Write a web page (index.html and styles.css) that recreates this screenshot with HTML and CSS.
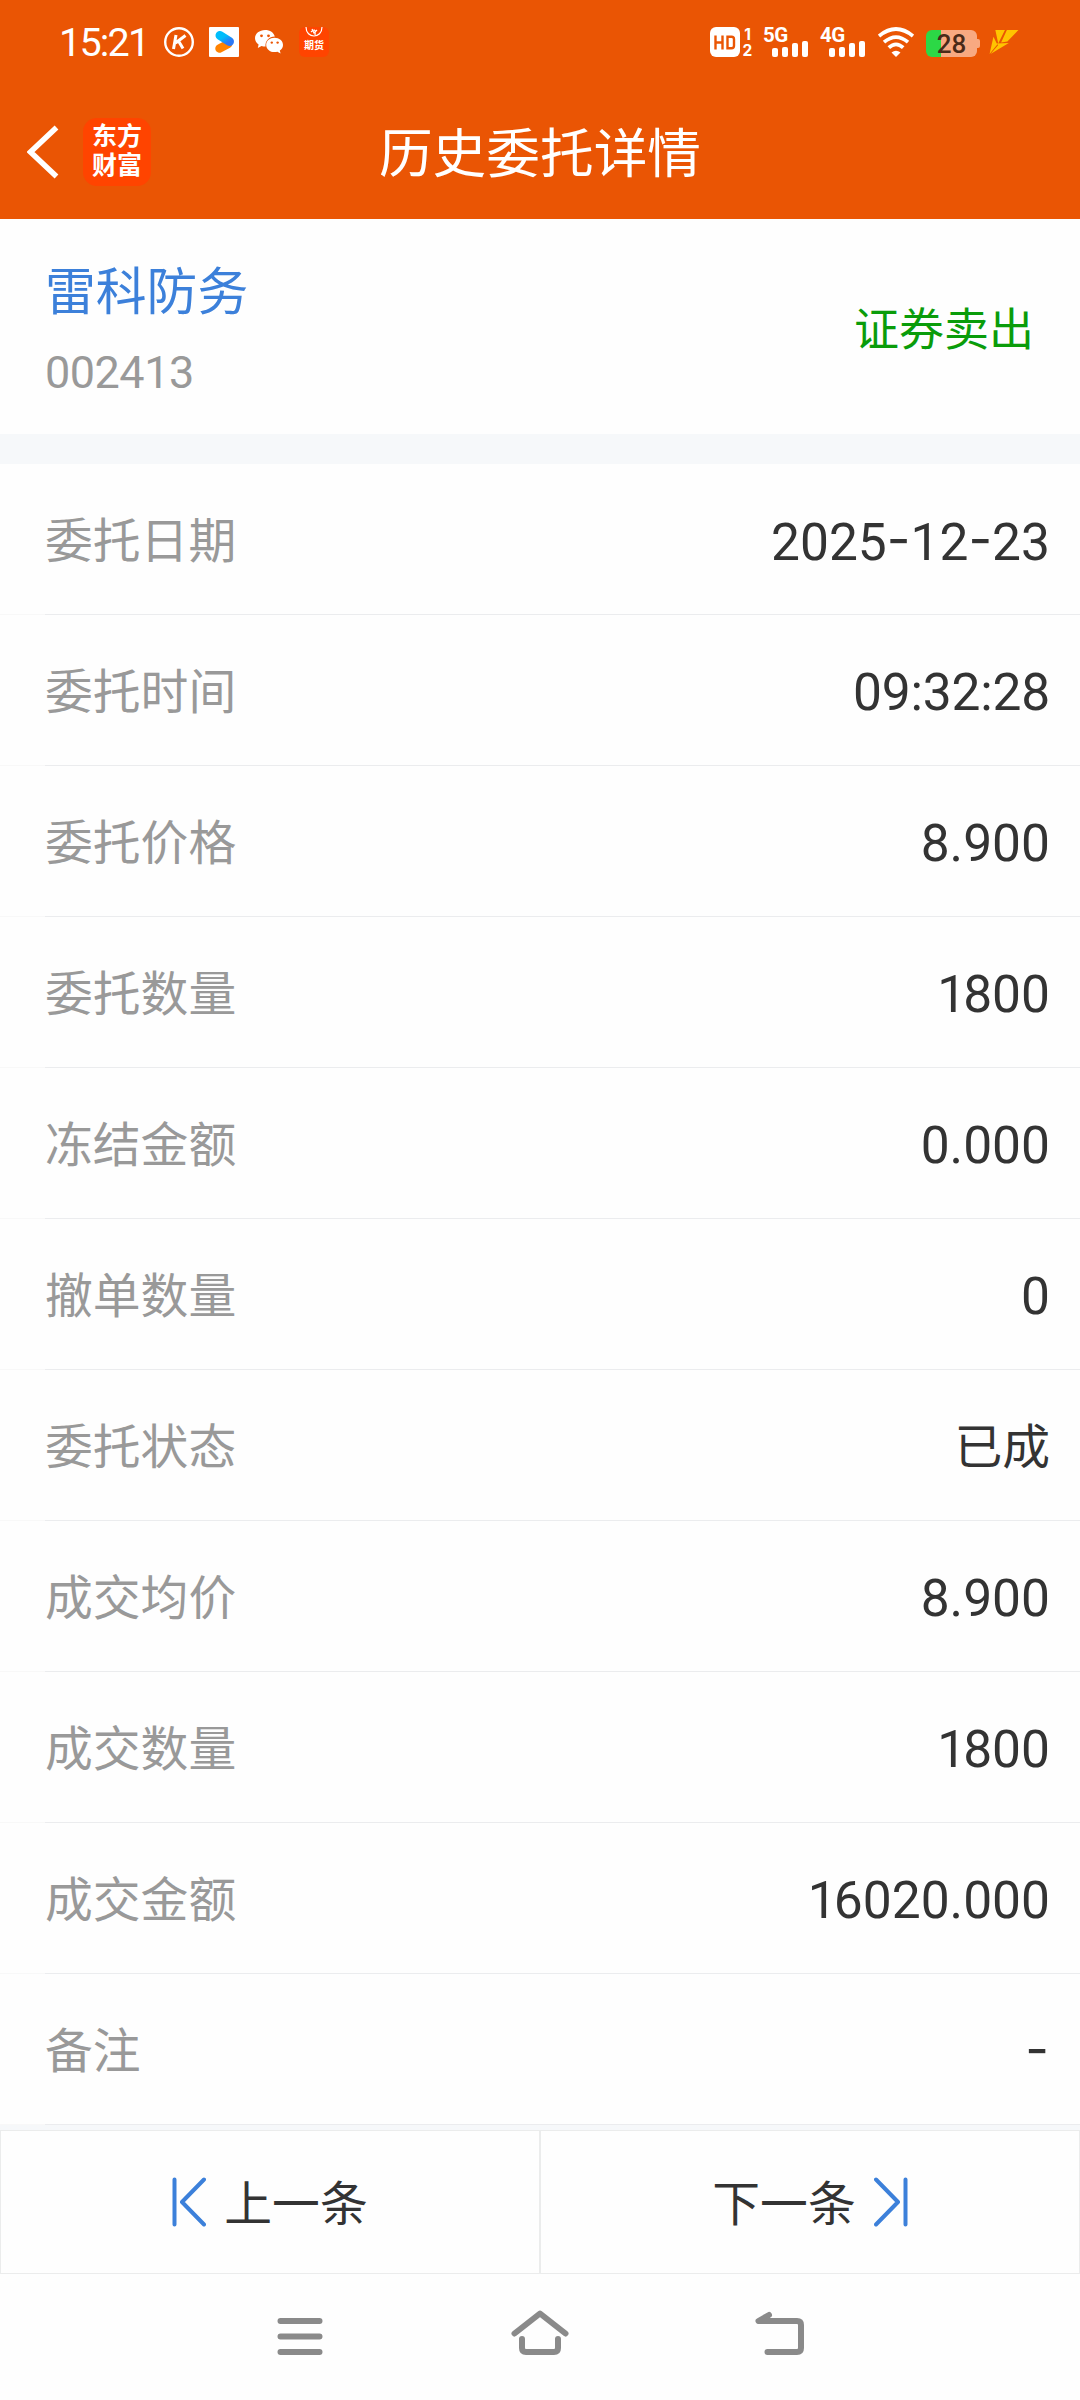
FILE: index.html
```html
<!DOCTYPE html>
<html lang="zh-CN">
<head>
<meta charset="utf-8">
<title>历史委托详情</title>
<link rel="stylesheet" href="styles.css">
</head>
<body>
<header class="header">
  <div class="status">
    <div class="status-left">
      <span class="clock">15:21</span>
      <svg class="s30" viewBox="0 0 30 30"><circle cx="15" cy="15" r="13.8" fill="none" stroke="#fff" stroke-width="2.4"/><path d="M12 8 9.500 22M21.500 8.500 11.500 16M14.500 14 19 21.500" fill="none" stroke="#fff" stroke-width="3"/></svg>
      <svg class="s30" viewBox="0 0 30 30"><defs><linearGradient id="play" x1="0" y1="0" x2="1" y2="1"><stop offset="0.300" stop-color="#00bdfb"/><stop offset="1" stop-color="#2b78f5"/></linearGradient></defs><rect width="30" height="30" rx="1" fill="#fff"/><path d="M10.500 21.500 19 17" stroke="#ff8200" stroke-width="8.500" stroke-linecap="round"/><path d="M11 8.500 20.500 14.500" stroke="url(#play)" stroke-width="9" stroke-linecap="round"/></svg>
      <svg class="s30" viewBox="0 0 30 30"><path d="M11 3C5.500 3 1 6.600 1 11.200c0 2.600 1.400 4.800 3.600 6.300L3.800 21l3.700-2c1.300.4 2.600.5 4 .5C11 14 15 9.500 20.800 9.500 20 5.700 16 3 11 3Z" fill="#fff"/><path d="M20.500 10.800c-4.700 0-8.300 3.100-8.300 7.100 0 4 3.700 7.200 8.300 7.200 1 0 2-.2 2.900-.4l3.200 1.900-.8-3.100c1.900-1.300 3.200-3.300 3.200-5.600 0-4-3.800-7.100-8.500-7.100Z" fill="#fff"/><g fill="#ea5504"><circle cx="7.500" cy="8.800" r="1.400"/><circle cx="14.500" cy="8.800" r="1.400"/><circle cx="17.800" cy="15.600" r="1.200"/><circle cx="23.600" cy="15.600" r="1.200"/></g></svg>
      <span class="futures"><svg viewBox="0 0 30 12"><path d="M7 0c0 12 16 12 16 0M12 5c3-3 5-3 4 3M13 2l2 4 3-3" fill="none" stroke="#fff" stroke-width="1.200"/></svg><b>期货</b></span>
    </div>
    <div class="status-right">
      <svg class="s30" viewBox="0 0 30 30"><rect width="30" height="30" rx="6" fill="#fff"/><path d="M5.500 8.500v14M12.500 8.500v14M5.500 15.500h7M17.500 9.700h4q2.500 0 2.500 2.500v6.600q0 2.500-2.500 2.500h-4z" fill="none" stroke="#ea5504" stroke-width="2.400"/></svg>
      <div class="sims"><span>1</span><span>2</span></div>
      <div class="cell"><span>5G</span><i></i><i></i><i></i><i></i></div>
      <div class="cell"><span>4G</span><i></i><i></i><i></i><i></i></div>
      <svg class="wifi" viewBox="0 0 36 30"><g fill="none" stroke="#fff" stroke-width="3.700"><path d="M1 9Q18-5 35 9"/><path d="M6 15.200Q18 5 30 15.200"/><path d="M10.800 20.700Q18 14 25.200 20.700"/></g><path d="M13.500 25.500Q18 22 22.500 25.500L18 30Z" fill="#fff"/></svg>
      <div class="battery">28</div>
      <svg class="bolt" viewBox="0 0 30 26"><path d="M6 0H16L9 14ZM18 0H30L18.500 12L12 13ZM0 25 4 7 8 15ZM1 25 9 15.500 7 14 20 13.500Z" fill="#ffc400"/></svg>
    </div>
  </div>
  <div class="nav">
    <svg class="back" viewBox="0 0 32 54"><path d="M29.500 2.500 3.500 27 29.500 51.500" fill="none" stroke="#fff" stroke-width="5.500"/></svg>
    <div class="brand">东方<br>财富</div>
    <h1>历史委托详情</h1>
  </div>
</header>
<section class="stock">
  <div><div class="name">雷科防务</div><div class="code">002413</div></div>
  <div class="side">证券卖出</div>
</section>
<dl class="list">
  <div class="row"><dt>委托日期</dt><dd>2025<span class="dash">-</span>12<span class="dash">-</span>23</dd></div>
  <div class="row"><dt>委托时间</dt><dd class="time">09:32:28</dd></div>
  <div class="row"><dt>委托价格</dt><dd>8.900</dd></div>
  <div class="row"><dt>委托数量</dt><dd><span class="one">1</span>800</dd></div>
  <div class="row"><dt>冻结金额</dt><dd>0.000</dd></div>
  <div class="row"><dt>撤单数量</dt><dd>0</dd></div>
  <div class="row"><dt>委托状态</dt><dd class="zh">已成</dd></div>
  <div class="row"><dt>成交均价</dt><dd>8.900</dd></div>
  <div class="row"><dt>成交数量</dt><dd><span class="one">1</span>800</dd></div>
  <div class="row"><dt>成交金额</dt><dd><span class="one">1</span>6020.000</dd></div>
  <div class="row"><dt>备注</dt><dd><span class="dash last">-</span></dd></div>
</dl>
<div class="pager">
  <div class="page"><svg class="step" viewBox="0 0 34 50"><path d="M2.500 2.500V47.500M32 2.500 10 25 32 47.500"/></svg><span>上一条</span></div>
  <div class="page"><span>下一条</span><svg class="step" viewBox="0 0 34 50"><path d="M31.500 2.500V47.500M2 2.500 24 25 2 47.500"/></svg></div>
</div>
<nav class="sysnav">
  <svg viewBox="0 0 60 60"><path d="M10.500 17H49.500M10.500 32.500H49.500M10.500 48H49.500"/></svg>
  <svg viewBox="0 0 60 60"><path d="M4.500 29.500 30 9.500 55.500 29.500M12 35V44Q12 48 16 48H44Q48 48 48 44V35"/></svg>
  <svg viewBox="0 0 60 60"><path d="M19 11 8.500 17H47Q51 17 51 21V44Q51 48 47 48H17.500"/></svg>
</nav>
</body>
</html>
```
FILE: styles.css
```css
* { box-sizing: border-box; }
body {
  margin: 0;
  width: 1080px;
  height: 2400px;
  background: #fefefe;
  color: #333;
  font-family: Roboto, "Noto Sans CJK SC", sans-serif;
  display: flex;
  flex-direction: column;
  overflow: hidden;
}
svg { display: block; flex: none; }
.header { height: 219px; background: #ea5504; color: #fff; }
.status {
  height: 84px;
  padding: 0 61px 0 59px;
  display: flex;
  justify-content: space-between;
  align-items: center;
}
.status-left { display: flex; align-items: center; gap: 15px; }
.clock { width: 90px; padding-top: 2px; font-size: 39.5px; letter-spacing: -1.8px; font-weight: 400; line-height: 42px; white-space: nowrap; }
.s30 { width: 30px; height: 30px; }
.futures { width: 30px; height: 30px; border-radius: 6px; background: #ff4400; overflow: hidden; text-align: center; }
.futures svg { width: 30px; height: 12px; }
.futures b { display: block; font-size: 10px; line-height: 13px; font-weight: 700; }
.status-right { display: flex; align-items: center; }
.sims { width: 24px; height: 30px; padding-left: 2px; display: flex; flex-direction: column; font: 700 15.5px/16px Inter, sans-serif; }
.sims span { width: 11px; height: 16px; text-align: center; }
.cell { position: relative; width: 44px; height: 30px; margin-right: 13px; display: flex; justify-content: flex-end; align-items: flex-end; gap: 4px; }
.cell span { position: absolute; left: -1px; top: -1px; font-size: 20.5px; line-height: 19px; letter-spacing: -0.5px; font-weight: 700; }
.cell i { width: 6px; height: 9px; border-radius: 2px; background: #fff; }
.cell i:nth-of-type(2) { height: 10px; }
.cell i:nth-of-type(3) { height: 14px; }
.cell i:nth-of-type(4) { height: 16px; }
.wifi { width: 36px; height: 30px; margin-right: 12px; }
.battery { position: relative; width: 51px; height: 27px; border-radius: 6px; background: linear-gradient(90deg, #2cd846 15px, #f8a981 15px); color: #4a2a18; font-size: 26px; line-height: 29px; font-weight: 500; text-align: center; margin-right: 12px; margin-top: 3px; }
.battery::after { content: ""; position: absolute; left: 51px; top: 9px; width: 3px; height: 9px; border-radius: 0 2px 2px 0; background: #f8a981; }
.bolt { width: 30px; height: 25px; }
.nav { height: 135px; padding-left: 27px; display: flex; align-items: center; position: relative; }
.back { width: 32px; height: 54px; }
.brand { width: 68px; height: 68px; margin-left: 24px; padding-top: 4px; border-radius: 14px; background: #ff4400; font-size: 25px; line-height: 29px; font-weight: 700; text-align: center; }
h1 { position: absolute; left: 0; right: 0; top: 33px; margin: 0; text-align: center; font-size: 53.7px; line-height: 76px; font-weight: 400; }
.stock { height: 215px; padding: 42px 46px 0 45px; display: flex; justify-content: space-between; }
.name { font-size: 50.8px; line-height: 64px; color: #3c80da; }
.code { font-size: 45px; line-height: 60px; margin-top: 18px; color: #999; letter-spacing: -0.5px; }
.side { margin-top: 37px; font-size: 45px; line-height: 66px; color: #0a9c0a; }
.list { margin: 0; border-top: 30px solid #f6f8fa; }
.row { height: 151px; padding: 4px 30px 0 45px; display: flex; justify-content: space-between; align-items: center; background: linear-gradient(90deg, #f8f8f8 45px, #ebecee 45px) bottom / 100% 1px no-repeat; }
dt { font-size: 47.8px; line-height: 70px; color: #999; }
dd { margin: 0; font-size: 51.5px; line-height: 70px; }
.zh { font-size: 47.8px; }
.time { letter-spacing: -0.2px; }
.one { letter-spacing: -3px; }
.dash { position: relative; top: -3px; font-family: Inter, sans-serif; }
.last { left: -1px; }
.pager { height: 149px; border-top: 5px solid #f6f8fa; display: flex; }
.page { width: 540px; border: 1px solid #ebecec; display: flex; justify-content: center; align-items: center; gap: 18px; font-size: 47.8px; line-height: 70px; }
.page span { padding-top: 5px; }
.step { width: 34px; height: 50px; fill: none; stroke: #3c80da; stroke-width: 4; stroke-linecap: round; stroke-linejoin: round; }
.sysnav { flex: 1; padding: 30px 270px 0; display: flex; justify-content: space-between; }
.sysnav svg { width: 60px; height: 60px; fill: none; stroke: #8a8a8a; stroke-width: 6; stroke-linecap: round; stroke-linejoin: round; }
```
